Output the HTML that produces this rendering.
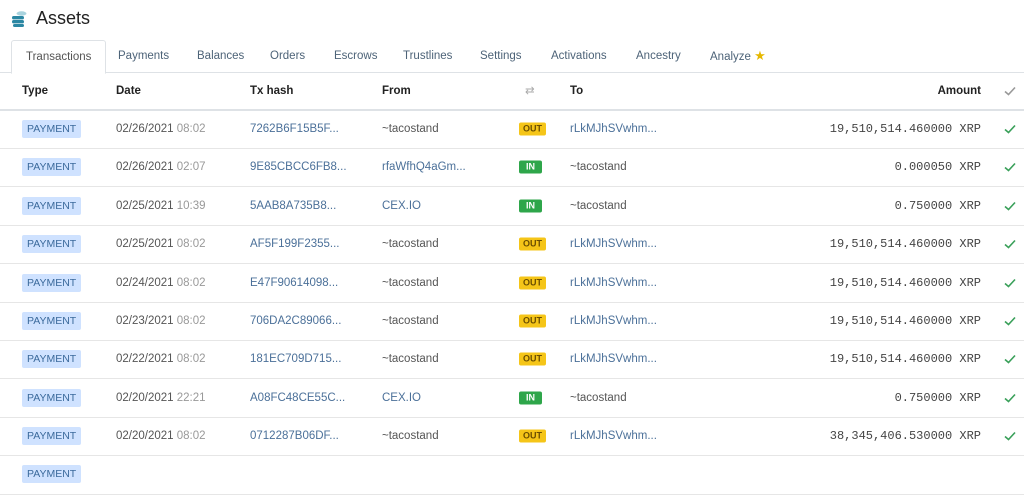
<!DOCTYPE html>
<html><head><meta charset="utf-8"><style>
body{margin:0;width:1024px;height:467px;overflow:hidden;background:#fff;font-family:"Liberation Sans",sans-serif;color:#555;font-size:11.5px}
.title{position:absolute;left:11px;top:8px;display:flex;align-items:center;font-size:18px;color:#222}
.tabs{position:absolute;left:0;top:40px;width:1024px;height:32px;border-bottom:1px solid #dee2e6}
.tab{position:absolute;top:9px;font-size:11.5px;line-height:14px;height:14px;color:#4d6378}
.tab.act{top:0;height:32px;border:1px solid #dee2e6;border-bottom:1px solid #fff;border-radius:3px 3px 0 0;background:#fff;line-height:32px;padding:0 14px;left:11px;color:#555}
.hdr{position:absolute;top:72px;width:1024px;height:37px;border-bottom:2px solid #dee2e6;font-weight:bold;color:#222}
.row{position:absolute;width:1024px;height:38px;border-bottom:1px solid #e6e6e6}
.c{position:absolute;top:50%;transform:translateY(-50%);white-space:nowrap;line-height:14px}
.pay{left:22px;background:#cfe2ff;color:#3b6a9c;font-size:10.5px;padding:2px 5px;border-radius:2px}
.lnk{color:#4b7099}
.b{left:519px;font-size:9px;font-weight:bold;padding:0 4px;border-radius:2px;line-height:13px}
.out{background:#f5c518;color:#6b4e00}
.in{background:#2ea64a;color:#fff;padding:0 7px}
.amt{right:43px;font-family:"Liberation Mono",monospace;font-size:12px;color:#444}
.chk{left:1004px;width:12px;height:10px}
</style></head><body>
<svg width="0" height="0" style="position:absolute"><defs><symbol id="ck" viewBox="0 0 12 10"><path d="M1 5.5 L4.5 8.5 L11 1.5" fill="none" stroke="currentColor" stroke-width="1.6"/></symbol></defs></svg>
<div class="title"><svg width="18" height="18" viewBox="0 0 18 18"><ellipse cx="10.5" cy="3.5" rx="5" ry="2.2" fill="#a9d3de"/><rect x="1" y="6" width="12" height="3.4" rx="1.7" fill="#2b87a3"/><rect x="1" y="10" width="12" height="3.4" rx="1.7" fill="#2b87a3"/><rect x="2" y="14" width="11" height="3" rx="1.5" fill="#2b87a3"/></svg><span style="margin-left:7px">Assets</span></div>
<div class="tabs">
<div class="tab act">Transactions</div>
<div class="tab" style="left:118px">Payments</div>
<div class="tab" style="left:197px">Balances</div>
<div class="tab" style="left:270px">Orders</div>
<div class="tab" style="left:334px">Escrows</div>
<div class="tab" style="left:403px">Trustlines</div>
<div class="tab" style="left:480px">Settings</div>
<div class="tab" style="left:551px">Activations</div>
<div class="tab" style="left:636px">Ancestry</div>
<div class="tab" style="left:710px">Analyze <span style="color:#e6b800;font-size:13px;line-height:14px">★</span></div>
</div>
<div class="hdr">
<div class="c" style="left:22px">Type</div><div class="c" style="left:116px">Date</div><div class="c" style="left:250px">Tx hash</div><div class="c" style="left:382px">From</div><div class="c" style="left:525px;color:#aaa;font-weight:normal">⇄</div><div class="c" style="left:570px">To</div><div class="c" style="right:43px">Amount</div><svg class="c chk" style="color:#999"><use href="#ck"/></svg>
</div>
<div class="row" style="top:110px"><span class="c pay">PAYMENT</span><span class="c" style="left:116px">02/26/2021 <span style="color:#999">08:02</span></span><span class="c lnk" style="left:250px">7262B6F15B5F...</span><span class="c" style="left:382px">~tacostand</span><span class="c b out">OUT</span><span class="c lnk" style="left:570px">rLkMJhSVwhm...</span><span class="c amt">19,510,514.460000 XRP</span><svg class="c chk" style="color:#3aa05a"><use href="#ck"/></svg></div>
<div class="row" style="top:148px"><span class="c pay">PAYMENT</span><span class="c" style="left:116px">02/26/2021 <span style="color:#999">02:07</span></span><span class="c lnk" style="left:250px">9E85CBCC6FB8...</span><span class="c lnk" style="left:382px">rfaWfhQ4aGm...</span><span class="c b in">IN</span><span class="c" style="left:570px">~tacostand</span><span class="c amt">0.000050 XRP</span><svg class="c chk" style="color:#3aa05a"><use href="#ck"/></svg></div>
<div class="row" style="top:187px"><span class="c pay">PAYMENT</span><span class="c" style="left:116px">02/25/2021 <span style="color:#999">10:39</span></span><span class="c lnk" style="left:250px">5AAB8A735B8...</span><span class="c lnk" style="left:382px">CEX.IO</span><span class="c b in">IN</span><span class="c" style="left:570px">~tacostand</span><span class="c amt">0.750000 XRP</span><svg class="c chk" style="color:#3aa05a"><use href="#ck"/></svg></div>
<div class="row" style="top:225px"><span class="c pay">PAYMENT</span><span class="c" style="left:116px">02/25/2021 <span style="color:#999">08:02</span></span><span class="c lnk" style="left:250px">AF5F199F2355...</span><span class="c" style="left:382px">~tacostand</span><span class="c b out">OUT</span><span class="c lnk" style="left:570px">rLkMJhSVwhm...</span><span class="c amt">19,510,514.460000 XRP</span><svg class="c chk" style="color:#3aa05a"><use href="#ck"/></svg></div>
<div class="row" style="top:264px"><span class="c pay">PAYMENT</span><span class="c" style="left:116px">02/24/2021 <span style="color:#999">08:02</span></span><span class="c lnk" style="left:250px">E47F90614098...</span><span class="c" style="left:382px">~tacostand</span><span class="c b out">OUT</span><span class="c lnk" style="left:570px">rLkMJhSVwhm...</span><span class="c amt">19,510,514.460000 XRP</span><svg class="c chk" style="color:#3aa05a"><use href="#ck"/></svg></div>
<div class="row" style="top:302px"><span class="c pay">PAYMENT</span><span class="c" style="left:116px">02/23/2021 <span style="color:#999">08:02</span></span><span class="c lnk" style="left:250px">706DA2C89066...</span><span class="c" style="left:382px">~tacostand</span><span class="c b out">OUT</span><span class="c lnk" style="left:570px">rLkMJhSVwhm...</span><span class="c amt">19,510,514.460000 XRP</span><svg class="c chk" style="color:#3aa05a"><use href="#ck"/></svg></div>
<div class="row" style="top:340px"><span class="c pay">PAYMENT</span><span class="c" style="left:116px">02/22/2021 <span style="color:#999">08:02</span></span><span class="c lnk" style="left:250px">181EC709D715...</span><span class="c" style="left:382px">~tacostand</span><span class="c b out">OUT</span><span class="c lnk" style="left:570px">rLkMJhSVwhm...</span><span class="c amt">19,510,514.460000 XRP</span><svg class="c chk" style="color:#3aa05a"><use href="#ck"/></svg></div>
<div class="row" style="top:379px"><span class="c pay">PAYMENT</span><span class="c" style="left:116px">02/20/2021 <span style="color:#999">22:21</span></span><span class="c lnk" style="left:250px">A08FC48CE55C...</span><span class="c lnk" style="left:382px">CEX.IO</span><span class="c b in">IN</span><span class="c" style="left:570px">~tacostand</span><span class="c amt">0.750000 XRP</span><svg class="c chk" style="color:#3aa05a"><use href="#ck"/></svg></div>
<div class="row" style="top:417px"><span class="c pay">PAYMENT</span><span class="c" style="left:116px">02/20/2021 <span style="color:#999">08:02</span></span><span class="c lnk" style="left:250px">0712287B06DF...</span><span class="c" style="left:382px">~tacostand</span><span class="c b out">OUT</span><span class="c lnk" style="left:570px">rLkMJhSVwhm...</span><span class="c amt">38,345,406.530000 XRP</span><svg class="c chk" style="color:#3aa05a"><use href="#ck"/></svg></div>
<div class="row" style="top:456px"><span class="c pay" style="top:18px">PAYMENT</span></div>
</body></html>
